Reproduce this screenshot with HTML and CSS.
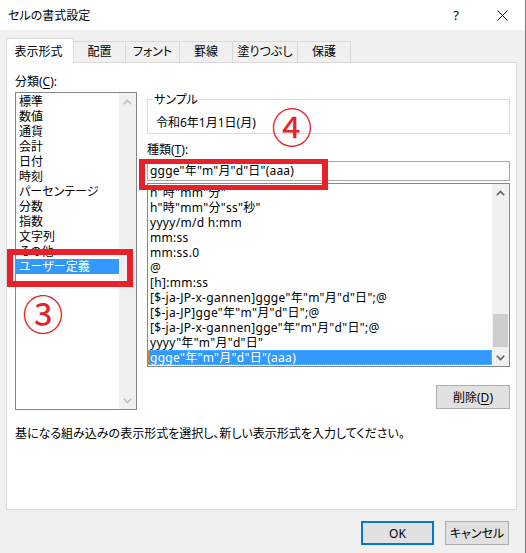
FILE: index.html
```html
<!DOCTYPE html>
<html lang="ja">
<head>
<meta charset="utf-8">
<title>セルの書式設定</title>
<link rel="stylesheet" href="styles.css">
</head>
<body>
<div class="dialog">
  <div class="titlebar">
    <span class="title">セルの書式設定</span>
    <span class="capbtn help">?</span>
    <span class="capbtn close"><svg width="11" height="11" viewBox="0 0 11 11"><path d="M0.5 0.5L10.5 10.5M10.5 0.5L0.5 10.5" stroke="#000" stroke-width="1" fill="none"/></svg></span>
  </div>
  <div class="content">
    <div class="tabs">
      <div class="tab active">表示形式</div>
      <div class="tab t-align">配置</div>
      <div class="tab t-font">フォント</div>
      <div class="tab t-border">罫線</div>
      <div class="tab t-fill">塗りつぶし</div>
      <div class="tab t-protect">保護</div>
    </div>
    <div class="panel">
      <div class="cols">
        <div class="leftcol">
          <div class="label">分類(<u>C</u>):</div>
          <div class="listbox catlist">
            <div class="items">
              <div class="item">標準</div>
              <div class="item">数値</div>
              <div class="item">通貨</div>
              <div class="item">会計</div>
              <div class="item">日付</div>
              <div class="item">時刻</div>
              <div class="item">パーセンテージ</div>
              <div class="item">分数</div>
              <div class="item">指数</div>
              <div class="item">文字列</div>
              <div class="item">その他</div>
              <div class="item selected">ユーザー定義</div>
            </div>
            <div class="vscroll disabled">
              <div class="arrow"><svg width="9" height="6" viewBox="0 0 9 6"><path d="M0.8 5.2L4.5 1.5L8.2 5.2" stroke="currentColor" stroke-width="1.6" fill="none"/></svg></div>
              <div class="track"></div>
              <div class="arrow"><svg width="9" height="6" viewBox="0 0 9 6"><path d="M0.8 0.8L4.5 4.5L8.2 0.8" stroke="currentColor" stroke-width="1.6" fill="none"/></svg></div>
            </div>
          </div>
        </div>
        <div class="rightcol">
          <fieldset class="sample">
            <legend>サンプル</legend>
            <div class="sample-text">令和6年1月1日(月)</div>
          </fieldset>
          <div class="label type-label">種類(<u>T</u>):</div>
          <div class="textbox">ggge"年"m"月"d"日"(aaa)</div>
          <div class="listbox fmtlist">
            <div class="items bottom">
              <div class="item">h:mm:ss AM/PM</div>
              <div class="item">h"時"mm"分"</div>
              <div class="item">h"時"mm"分"ss"秒"</div>
              <div class="item">yyyy/m/d h:mm</div>
              <div class="item">mm:ss</div>
              <div class="item">mm:ss.0</div>
              <div class="item">@</div>
              <div class="item">[h]:mm:ss</div>
              <div class="item">[$-ja-JP-x-gannen]ggge"年"m"月"d"日";@</div>
              <div class="item">[$-ja-JP]gge"年"m"月"d"日";@</div>
              <div class="item">[$-ja-JP-x-gannen]gge"年"m"月"d"日";@</div>
              <div class="item">yyyy"年"m"月"d"日"</div>
              <div class="item selected focus">ggge"年"m"月"d"日"(aaa)</div>
            </div>
            <div class="vscroll">
              <div class="arrow"><svg width="9" height="6" viewBox="0 0 9 6"><path d="M0.8 5.2L4.5 1.5L8.2 5.2" stroke="currentColor" stroke-width="1.6" fill="none"/></svg></div>
              <div class="track"><div class="thumb"></div></div>
              <div class="arrow"><svg width="9" height="6" viewBox="0 0 9 6"><path d="M0.8 0.8L4.5 4.5L8.2 0.8" stroke="currentColor" stroke-width="1.6" fill="none"/></svg></div>
            </div>
          </div>
          <div class="delrow"><button class="btn del">削除(<u>D</u>)</button></div>
        </div>
      </div>
      <div class="desc">基になる組み込みの表示形式を選択し、新しい表示形式を入力してください。</div>
    </div>
    <div class="footer">
      <button class="btn ok">OK</button>
      <button class="btn cancel">キャンセル</button>
    </div>
  </div>
  <div class="mark box1"></div>
  <div class="mark box2"></div>
  <div class="num num3">③</div>
  <div class="num num4">④</div>
</div>
</body>
</html>
```

FILE: styles.css
```css
* { box-sizing: border-box; }
html, body { margin: 0; padding: 0; }
body {
  width: 526px;
  height: 553px;
  overflow: hidden;
  background: #f0f0f0;
  font-family: "Noto Sans", "Noto Sans CJK JP", sans-serif;
  font-size: 12px;
  line-height: 15px;
  color: #000;
  font-feature-settings: "palt";
}
.dialog {
  position: relative;
  width: 526px;
  height: 553px;
  background: #f0f0f0;
  border-right: 1px solid #7a7a7a;
}
.titlebar {
  height: 30px;
  background: #fff;
  display: flex;
  align-items: center;
}
.title { flex: 1; padding-left: 8px; padding-top: 1px; }
.capbtn {
  width: 46px;
  height: 30px;
  display: flex;
  align-items: center;
  justify-content: center;
}
.help { font-size: 13px; }
.content { padding: 8px 0 0 6px; }
.tabs {
  display: flex;
  align-items: flex-end;
  height: 24px;
}
.tab {
  height: 21px;
  border: 1px solid #d9d9d9;
  border-bottom: none;
  margin-left: -1px;
  background: #f0f0f0;
  text-align: center;
  line-height: 20px;
}
.tab.active {
  position: relative;
  z-index: 1;
  height: 25px;
  margin-bottom: -1px;
  margin-left: 0;
  width: 68px;
  background: #fff;
  line-height: 25px;
  padding-right: 3px;
}
.t-align { width: 53px; }
.t-font { width: 55px; }
.t-border { width: 54px; }
.t-fill { width: 66px; }
.t-protect { width: 54px; }
.panel {
  width: 511px;
  height: 448px;
  background: #fff;
  border: 1px solid #d9d9d9;
  padding: 11px 0 0 8px;
}
.cols {
  display: grid;
  grid-template-columns: 122px 363px;
  column-gap: 10px;
}
.label u, .btn u { text-decoration: underline; text-underline-offset: 2px; }
.catlist { margin-top: 3px; height: 318px; }
.listbox {
  border: 1px solid #828790;
  display: flex;
  background: #fff;
}
.items {
  flex: 1;
  overflow: hidden;
  display: flex;
  flex-direction: column;
  padding-top: 1px;
}
.items.bottom { justify-content: flex-end; padding-top: 0; padding-bottom: 1px; }
.item {
  height: 15px;
  line-height: 15px;
  padding-left: 3px;
  white-space: nowrap;
  flex: none;
}
.fmtlist .item { padding-left: 2px; letter-spacing: 0.3px; }
.item.selected { background: #3399ff; color: #fff; }
.item.focus { outline: 1px dotted #e8a050; outline-offset: -1px; }
.vscroll {
  width: 17px;
  background: #f0f0f0;
  display: flex;
  flex-direction: column;
  color: #606060;
}
.vscroll.disabled { color: #bfbfbf; }
.arrow {
  height: 17px;
  display: flex;
  align-items: center;
  justify-content: center;
}
.track {
  flex: 1;
  display: flex;
  flex-direction: column;
  justify-content: flex-end;
}
.thumb {
  height: 33px;
  margin: 0 1px 2px 1px;
  background: #cdcdcd;
}
.rightcol { padding-top: 18px; }
.sample {
  margin: 0;
  border: 1px solid #dcdcdc;
  padding: 0 5px 3px 5px;
  min-width: 0;
}
.sample legend { padding: 0 1px; line-height: 15px; }
.sample-text { margin-top: 8px; padding-left: 3px; }
.type-label { margin-top: 8px; }
.textbox {
  margin-top: 4px;
  height: 20px;
  border: 1px solid #a9a9a9;
  padding-left: 2px;
  line-height: 18px;
  letter-spacing: 0.2px;
  white-space: nowrap;
}
.fmtlist { margin-top: 2px; height: 184px; }
.delrow { display: flex; justify-content: flex-end; margin-top: 18px; }
.btn {
  font: inherit;
  font-feature-settings: "palt";
  color: #000;
  background: #e1e1e1;
  border: 1px solid #adadad;
  height: 24px;
  padding: 0;
  margin: 0;
}
.del { width: 74px; }
.desc { margin-top: 16px; padding-left: 0; }
.footer {
  display: flex;
  justify-content: flex-end;
  gap: 11px;
  width: 511px;
  padding-right: 8px;
  margin-top: 11px;
}
.ok { width: 73px; border: 2px solid #0078d7; }
.cancel { width: 64px; }
.mark {
  position: absolute;
  border: 6px solid #e8202a;
}
.box1 { left: 7px; top: 249px; width: 126px; height: 38px; }
.box2 { left: 139px; top: 159px; width: 189px; height: 31px; border-width: 5px 6px; }
.num {
  position: absolute;
  width: 44px;
  height: 44px;
  display: flex;
  align-items: center;
  justify-content: center;
  font-family: "Noto Sans CJK JP", sans-serif;
  font-size: 41px;
  line-height: 1;
  color: #e8202a;
}
.num3 { left: 21px; top: 290px; }
.num4 { left: 270px; top: 103px; }
```
